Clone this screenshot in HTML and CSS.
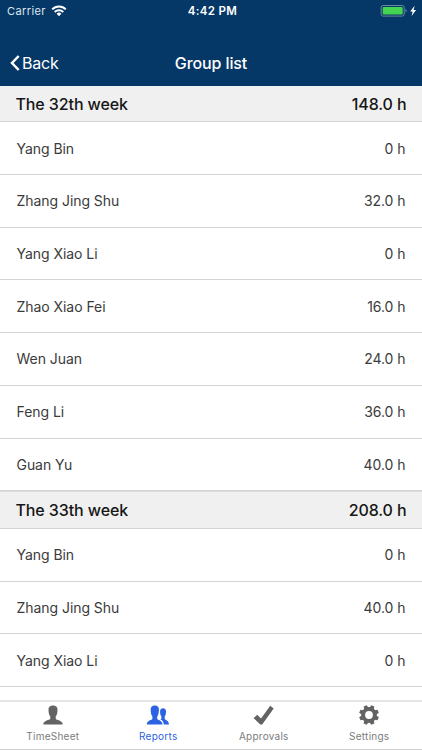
FILE: index.html
```html
<!DOCTYPE html>
<html lang="en">
<head>
    <meta charset="UTF-8">
    <meta name="viewport" content="width=device-width, initial-scale=1.0">
    <link rel="stylesheet" href="styles.css">
    <title>Group list</title>
</head>
<body>
    <div class="app">
      <header class="header">
        <div class="status">
          <div class="status-left">
            <span class="carrier">Carrier</span>
            <svg class="wifi" viewBox="0 0 16 12" width="16" height="12">
              <g fill="none" stroke="#fff" stroke-width="1.9">
                <path d="M1.2 4.3a9.6 9.6 0 0 1 13.6 0"/>
                <path d="M3.7 7a6.1 6.1 0 0 1 8.6 0"/>
              </g>
              <path d="M5.6 8.8a3.4 3.4 0 0 1 4.8 0L8 11.2z" fill="#fff"/>
            </svg>
          </div>
          <span class="time">4:42 PM</span>
          <div class="status-right">
            <svg class="battery" viewBox="0 0 38 12" width="38" height="12">
              <rect x="1.2" y=".5" width="23" height="10.6" rx="2" fill="none" stroke="#6c8a9f"/>
              <rect x="2.7" y="2" width="20" height="7.6" rx="1" fill="#43d551"/>
              <path d="M25.500 4v3.600c1.500-.5 1.500-3.100 0-3.600z" fill="#6c8a9f"/>
              <path d="M34.600.7l-4.400 5.700h2.400l-1 4.600 4.500-6h-2.500z" fill="#fff"/>
            </svg>
          </div>
        </div>
        <nav class="navbar">
          <a class="back">
            <svg viewBox="0 0 10 16" width="10" height="16"><path d="M8.700 1L2 8l6.700 7" fill="none" stroke="#fff" stroke-width="2.500"/></svg>
            <span>Back</span>
          </a>
          <h1 class="title">Group list</h1>
        </nav>
      </header>

      <main class="list">
        <section class="week">
          <h2 class="week-head"><span>The 32th week</span><span>148.0 h</span></h2>
          <div class="row"><span>Yang Bin</span><span>0 h</span></div>
          <div class="row"><span>Zhang Jing Shu</span><span>32.0 h</span></div>
          <div class="row"><span>Yang Xiao Li</span><span>0 h</span></div>
          <div class="row"><span>Zhao Xiao Fei</span><span>16.0 h</span></div>
          <div class="row"><span>Wen Juan</span><span>24.0 h</span></div>
          <div class="row"><span>Feng Li</span><span>36.0 h</span></div>
          <div class="row"><span>Guan Yu</span><span>40.0 h</span></div>
        </section>
        <section class="week">
          <h2 class="week-head"><span>The 33th week</span><span>208.0 h</span></h2>
          <div class="row"><span>Yang Bin</span><span>0 h</span></div>
          <div class="row"><span>Zhang Jing Shu</span><span>40.0 h</span></div>
          <div class="row"><span>Yang Xiao Li</span><span>0 h</span></div>
        </section>
      </main>

      <footer class="tabs">
        <a class="tab">
          <svg viewBox="0 0 24 20" width="24" height="20">
            <path d="M12 .5c-3.100 0-4.700 1.700-4.500 4.500l.2 2.500c.2 1.900.8 3 1.600 3.900v2.300C8.900 15.200 2.300 15 2.300 19.500h19.400c0-4.500-6.600-4.300-7-5.800v-2.300c.8-.9 1.400-2 1.600-3.900l.2-2.500C16.700 2.200 15.100.5 12 .5z"/>
          </svg>
          <span>TimeSheet</span>
        </a>
        <a class="tab active">
          <svg viewBox="0 0 24 20" width="24" height="20">
            <path d="M8.800.5C5.900.5 4.500 2.200 4.700 5l.2 2.500c.2 1.900.7 3 1.500 3.900v2.300C6 15.200.8 15 .8 19.500h15.700c0-4.500-4.900-4.300-5.300-5.800v-2.300c.8-.9 1.300-2 1.500-3.900l.2-2.500C13.100 2.200 11.700.5 8.800.5z"/>
            <path d="M17 3.200c-2 0-3 1.300-2.900 3.300 0 2.500.4 3.900 1.300 5v2c-.1.400-.5.700-1 .9 2.500 1 3.300 2.300 3.300 5.100H23c0-4-3.800-4.500-4.300-5.800v-2.200c.9-1.100 1.300-2.500 1.300-5 .1-2-1-3.300-3-3.300z"/>
          </svg>
          <span>Reports</span>
        </a>
        <a class="tab">
          <svg viewBox="0 0 24 20" width="24" height="20">
            <path d="M1.600 13.100l3.700-3.400 3.700 3.800L18.200.8l3.500 2.800L10.200 19.500H8.300z"/>
          </svg>
          <span>Approvals</span>
        </a>
        <a class="tab">
          <svg viewBox="0 0 24 20" width="24" height="20">
            <g transform="translate(12 10)">
              <circle class="gear-ring" r="5.900"/>
              <path d="M-2.300-7L-1.700-9.900H1.700L2.300-7zM-2.300 7L-1.700 9.900H1.700L2.300 7zM-7-2.300L-9.900-1.700V1.700L-7 2.300zM7-2.300L9.900-1.700V1.700L7 2.300z" transform="rotate(22.500)"/>
              <path d="M-2.300-7L-1.700-9.900H1.700L2.300-7zM-2.300 7L-1.700 9.900H1.700L2.300 7zM-7-2.300L-9.900-1.700V1.700L-7 2.300zM7-2.300L9.900-1.700V1.700L7 2.300z" transform="rotate(67.500)"/>
            </g>
          </svg>
          <span>Settings</span>
        </a>
      </footer>
    </div>
</body>
</html>
```
FILE: styles.css
```css
* {
  box-sizing: border-box;
}
html,body {
  height: 100%;
  margin: 0;
  padding: 0;
}
body {
  background-color: #fff;
  color: #3b3b3b;
  font-family: Inter, "Liberation Sans", Arial, sans-serif;
  overflow: hidden;
}
.app {
  display: flex;
  flex-direction: column;
  height: 750px;
  border-bottom: 1px solid #cfcfcf;
}
.header {
  flex: none;
  height: 85.7px;
  background-color: #053867;
  color: #fff;
}
.status {
  display: grid;
  grid-template-columns: 1fr auto 1fr;
  align-items: center;
  height: 22px;
  padding: 0 4px 0 7px;
}
.status-left {
  display: flex;
  align-items: center;
  gap: 5px;
}
.carrier {
  color: #dfe7ee;
  font-size: 11px;
  letter-spacing: 0.4px;
}
.time {
  font-size: 11.5px;
  font-weight: 600;
  letter-spacing: 0.35px;
}
.status-right {
  display: flex;
  justify-content: flex-end;
}
.navbar {
  display: grid;
  grid-template-columns: 1fr auto 1fr;
  align-items: center;
  height: 42px;
  margin-top: 20px;
  padding: 0 10px;
}
.back {
  display: flex;
  align-items: center;
  gap: 2px;
  font-size: 16px;
  letter-spacing: -0.2px;
}
.title {
  margin: 0;
  font-size: 16px;
  font-weight: 500;
  letter-spacing: -0.1px;
}
.list {
  flex: 1;
  min-height: 0;
  overflow: hidden;
}
.week + .week {
  border-top: 1px solid #dedede;
}
.week-head {
  display: flex;
  justify-content: space-between;
  align-items: center;
  height: 36.7px;
  margin: 0;
  padding: 0 15.5px;
  background-color: #f0f0f0;
  border-bottom: 1px solid #d3d3d3;
  color: #161616;
  font-size: 16px;
  font-weight: 500;
  letter-spacing: -0.1px;
}
.row {
  display: flex;
  justify-content: space-between;
  align-items: center;
  height: 52.7px;
  padding: 0 16.5px;
  border-bottom: 1px solid #d3d3d3;
  font-size: 14px;
  letter-spacing: -0.05px;
}
.tabs {
  display: flex;
  flex: none;
  height: 49px;
  border-top: 2px solid #e6e6e6;
}
.tab {
  display: flex;
  flex: 1;
  flex-direction: column;
  align-items: center;
  gap: 5px;
  padding-top: 3px;
  color: #7b7b7b;
  font-size: 10px;
  line-height: 12px;
  letter-spacing: 0.25px;
}
.tab svg {
  fill: #636363;
}
.tab .gear-ring {
  fill: none;
  stroke: #636363;
  stroke-width: 4px;
}
.tab.active {
  color: #2b63e2;
}
.tab.active svg {
  fill: #2b63e2;
}
```
